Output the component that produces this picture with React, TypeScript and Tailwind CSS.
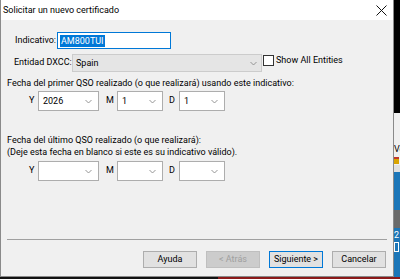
import React from "react";

const font = { fontFamily: 'Roboto, "Noto Sans", sans-serif' };

function Chevron() {
  return (
    <svg width="7" height="5" viewBox="0 0 7 5" className="shrink-0">
      <polyline points="0.5,1 3.5,4 6.5,1" fill="none" stroke="#8a8a8a" strokeWidth="0.9" />
    </svg>
  );
}

function Combo({ value, w }: { value: string; w: string }) {
  return (
    <div className={`${w} h-[20px] bg-white border border-[#adadad] flex items-center justify-between pl-[4px] pr-[6px]`}>
      <span className="text-[9px] text-black leading-none">{value}</span>
      <Chevron />
    </div>
  );
}

function DateRow({ y, m, d }: { y: string; m: string; d: string }) {
  return (
    <div className="flex items-center h-[20px] pl-[28px] whitespace-nowrap">
      <span className="w-[9px] text-[9px]">Y</span>
      <Combo value={y} w="w-[61px]" />
      <span className="ml-[7px] w-[11px] text-[9px]">M</span>
      <Combo value={m} w="w-[46px]" />
      <span className="ml-[6px] w-[10px] text-[9px]">D</span>
      <Combo value={d} w="w-[46px]" />
    </div>
  );
}

function Btn({ label, variant }: { label: string; variant?: "disabled" | "default" }) {
  const cls =
    variant === "disabled"
      ? "bg-[#cccccc] border-[#bfbfbf] text-[#a0a0a0]"
      : variant === "default"
      ? "bg-[#e1e1e1] border-[#0078d7] text-black"
      : "bg-[#e1e1e1] border-[#adadad] text-black";
  return (
    <div className={`w-[54px] h-[17px] border ${cls} flex items-center justify-center text-[9px] leading-none whitespace-nowrap`}>
      {label}
    </div>
  );
}

export default function App() {
  return (
    <div className="w-[400px] h-[279px] bg-black overflow-hidden flex flex-col" style={font}>
      <div className="flex h-[277px]">
        <div className="w-[394px] h-full flex flex-col border-l border-r border-b border-[#8a8a8a] bg-[#f0f0f0] text-black whitespace-nowrap">
          <div className="h-[20px] bg-white flex items-center justify-between pl-[2px] pr-[6px] shrink-0">
            <span className="text-[9px] leading-none">Solicitar un nuevo certificado</span>
            <svg width="11" height="11" viewBox="0 0 11 11">
              <path d="M0.5 0.5 L10.5 10.5 M10.5 0.5 L0.5 10.5" stroke="#111" strokeWidth="1" />
            </svg>
          </div>
          <div className="flex-1 flex flex-col">
            <div className="mt-[12px] flex items-center h-[17px] pl-[14px]">
              <span className="w-[42px] text-[9px]">Indicativo:</span>
              <div className="w-[114px] h-[17px] bg-white border border-[#0078d7] flex items-center pl-[2px]">
                <span className="bg-[#0078d7] text-white text-[9px] leading-[12px] px-[1px]">AM800TUI</span>
              </div>
            </div>
            <div className="mt-[5px] flex items-center h-[18px] pl-[13px]">
              <span className="w-[58px] text-[9px]">Entidad DXCC:</span>
              <div className="w-[190px] h-[18px] bg-[#e5e5e5] border border-[#cccccc] flex items-center justify-between pl-[3px] pr-[4px]">
                <span className="text-[9px] leading-none">Spain</span>
                <Chevron />
              </div>
              <div className="ml-[1px] w-[11px] h-[11px] border border-[#333] bg-white self-start mt-[1px]" />
              <span className="ml-[2px] text-[9px] self-start leading-[12px]">Show All Entities</span>
            </div>
            <div className="mt-[4px] pl-[6px] text-[9px] leading-[14px]">
              Fecha del primer QSO realizado (o que realizará) usando este indicativo:
            </div>
            <div className="mt-[1px]">
              <DateRow y="2026" m="1" d="1" />
            </div>
            <div className="mt-[23px] pl-[6px] text-[9px] leading-[12px]">
              Fecha del último QSO realizado (o que realizará):
              <br />
              (Deje esta fecha en blanco si este es su indicativo válido).
            </div>
            <div className="mt-[3px]">
              <DateRow y="" m="" d="" />
            </div>
            <div className="flex-1" />
            <div className="mx-[6px] h-[1px] bg-[#a0a0a0]" />
            <div className="mt-[11px] mb-[8px] flex justify-end gap-[9px] pr-[7px]">
              <Btn label="Ayuda" />
              <Btn label="< Atrás" variant="disabled" />
              <Btn label="Siguiente >" variant="default" />
              <Btn label="Cancelar" />
            </div>
          </div>
        </div>
        <div className="w-[6px] h-full flex flex-col overflow-hidden">
          <div className="h-[113px] bg-black" />
          <div className="h-[30px] bg-[#f0f0f0]" />
          <div className="h-[12px] bg-[#f0f0f0] text-[9px] leading-[12px] overflow-hidden whitespace-nowrap">Ve</div>
          <div className="h-[10px] bg-[#f0f0f0] flex items-center">
            <div className="w-[5px] h-[7px] bg-[#d9a400] border-t-2 border-[#c0392b]" />
          </div>
          <div className="h-[7px] bg-[#e0e0e0]" />
          <div className="flex-1 bg-[#1b76b8] flex flex-col">
            <div className="h-[38px]" />
            <div className="h-[18px] bg-[#6a6a6a]" />
            <div className="h-[14px] text-white text-[9px] leading-[14px]">2</div>
            <div className="w-[5px] h-[10px] border border-white" />
          </div>
        </div>
      </div>
      <div className="flex h-[2px]">
        <div className="w-[218px] bg-[#111]" />
        <div className="flex-1 bg-[#8b1a1a]" />
      </div>
    </div>
  );
}
